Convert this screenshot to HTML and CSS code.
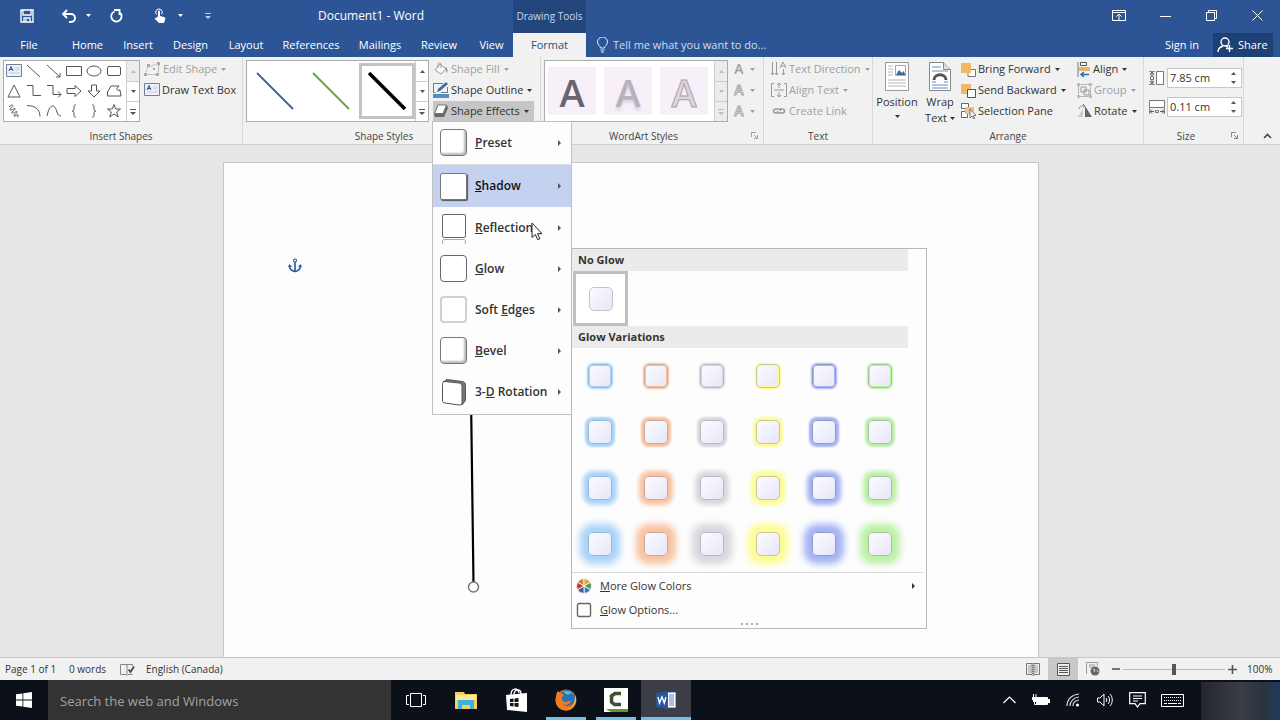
FILE: index.html
```html
<!DOCTYPE html>
<html lang="en">
<head>
<meta charset="utf-8">
<title>Document1 - Word</title>
<link rel="stylesheet" href="styles.css">
</head>
<body>
<svg class="defs" aria-hidden="true">
  <defs>
    <symbol id="down" viewBox="0 0 5 3"><path d="M0 0h5L2.500 3z" fill="currentColor"/></symbol>
    <symbol id="up" viewBox="0 0 5 3"><path d="M0 3h5L2.500 0z" fill="currentColor"/></symbol>
    <symbol id="more" viewBox="0 0 6 6"><path d="M0 0h6v1H0zM0 3h6L3 6z" fill="currentColor"/></symbol>
    <symbol id="right" viewBox="0 0 3 6"><path d="M0 0v6l3-3z" fill="currentColor"/></symbol>
    <symbol id="textbox" viewBox="0 0 16 14"><path d="M.5.500h15v12H.5z" fill="#eef1f8" stroke="#6f7f9c"/><path d="M3 7l2-4.500L7 7M3.700 5.500h2.600" fill="none" stroke="#35507f"/><path d="M9 4h5M9 6h5M3 9h11" stroke="#c5cddd"/></symbol>
    <symbol id="launcher" viewBox="0 0 7 7"><path d="M.5 5V.500H5M3 3l3 3M6.500 3v3.500H3" fill="none" stroke="currentColor"/></symbol>
  </defs>
</svg>
<div class="app">
  <header class="titlebar">
    <div class="qat">
      <button class="qbtn save" aria-label="Save"><svg width="14" height="14" viewBox="0 0 14 14"><path d="M1 1h12v12H1z" fill="none" stroke="#fff" stroke-width="1.400"/><path d="M3 1v5h8V1M4 13V9h6v4M6 10v3" fill="none" stroke="#fff" stroke-width="1.300"/></svg></button>
      <button class="qbtn undo" aria-label="Undo"><svg width="16" height="14" viewBox="0 0 16 14"><path d="M2 5h8a4 4 0 0 1 0 8H8M6 1L2 5l4 4" fill="none" stroke="#fff" stroke-width="1.900"/></svg><svg class="caret" width="5" height="3"><use href="#down"/></svg></button>
      <button class="qbtn redo" aria-label="Repeat"><svg width="14" height="14" viewBox="0 0 14 14"><path d="M5.500 2.500A5.200 5.200 0 1 0 10.500 3.200M5 1h5.500v5" fill="none" stroke="#fff" stroke-width="1.800"/></svg></button>
      <button class="qbtn touch" aria-label="Touch/Mouse Mode"><svg width="13" height="16" viewBox="0 0 13 16"><path d="M4 8V3.500a1 1 0 0 1 2 0V8l4 1c1.500.400 1.500 1.500 1 3l-1 3H5L1 11c-.6-1 .5-1.800 1.400-1z" fill="#fff"/><path d="M2.500 6.500A3.300 3.300 0 1 1 7.600 6.300" fill="none" stroke="#fff"/></svg><svg class="caret" width="5" height="3"><use href="#down"/></svg></button>
      <button class="qbtn custom" aria-label="Customize Quick Access Toolbar"><svg width="6" height="6"><use href="#more"/></svg></button>
    </div>
    <h1 class="doc-title">Document1 - Word</h1>
    <div class="context-title">Drawing Tools</div>
    <div class="window-buttons">
      <button aria-label="Ribbon Display Options"><svg width="14" height="11" viewBox="0 0 14 11"><path d="M.5.500h13v10H.5zM0 2.500h14M7 10V4M4.500 6.500L7 4l2.500 2.500" fill="none" stroke="#fff"/></svg></button>
      <button aria-label="Minimize"><svg width="11" height="11" viewBox="0 0 11 11"><path d="M0 6.500h11" stroke="#fff"/></svg></button>
      <button aria-label="Restore"><svg width="11" height="11" viewBox="0 0 11 11"><path d="M.5 2.500h8v8h-8zM2.500 2V.500h8v8H9" fill="none" stroke="#fff"/></svg></button>
      <button aria-label="Close"><svg width="11" height="11" viewBox="0 0 11 11"><path d="M.5.500l10 10M10.500.500l-10 10" stroke="#fff"/></svg></button>
    </div>
  </header>

  <nav class="tabs">
    <div class="tab-list">
      <button>File</button><button>Home</button><button>Insert</button><button>Design</button><button>Layout</button><button>References</button><button>Mailings</button><button>Review</button><button>View</button><button class="active">Format</button>
    </div>
    <label class="tell"><svg width="11" height="16" viewBox="0 0 11 16"><path d="M3.500 11c0-2-3-3-3-6a5 5 0 0 1 10 0c0 3-3 4-3 6zM3.500 13h4M4 15h3" fill="none" stroke="#e6eefb"/></svg><input type="text" placeholder="Tell me what you want to do..." aria-label="Tell me what you want to do"></label>
    <button class="signin">Sign in</button>
    <button class="share"><svg width="17" height="16" viewBox="0 0 17 16"><circle cx="8" cy="5" r="4" fill="none" stroke="#fff" stroke-width="1.400"/><path d="M1 15c0-3 2-5 5-6M9 9l2 1M12.500 8v7M9 11.500h7" fill="none" stroke="#fff" stroke-width="1.400"/></svg>Share</button>
  </nav>

  <section class="ribbon">
    <div class="group insert-shapes">
      <div class="group-body">
        <div class="gallery">
          <div class="shape-grid">
            <button aria-label="Text box"><svg width="16" height="14"><use href="#textbox"/></svg></button>
            <button aria-label="Line"><svg viewBox="0 0 16 14"><path d="M1 1l13 12"/></svg></button>
            <button aria-label="Arrow"><svg viewBox="0 0 16 14"><path d="M1 1l13 12M14 9v4h-4"/></svg></button>
            <button aria-label="Rectangle"><svg viewBox="0 0 16 14"><path d="M.5 2.500h15v9H.5z"/></svg></button>
            <button aria-label="Oval"><svg viewBox="0 0 16 14"><ellipse cx="8" cy="7" rx="7" ry="5"/></svg></button>
            <button aria-label="Rounded rectangle"><svg viewBox="0 0 16 14"><rect x="1.500" y="2.500" width="13" height="9" rx="1.500"/></svg></button>
            <button aria-label="Triangle"><svg viewBox="0 0 16 14"><path d="M8 1l6 12H2z"/></svg></button>
            <button aria-label="Elbow connector"><svg viewBox="0 0 16 14"><path d="M1 1.500h6v10h8"/></svg></button>
            <button aria-label="Elbow arrow"><svg viewBox="0 0 16 14"><path d="M1 1.500h6v9h8M12 7.500l3 3-3 3"/></svg></button>
            <button aria-label="Right arrow"><svg viewBox="0 0 16 14"><path d="M1 4.500h8v-3l6 5.500-6 5.500v-3H1z"/></svg></button>
            <button aria-label="Down arrow"><svg viewBox="0 0 16 14"><path d="M5.500 1h5v6h3.500L8 13 2 7h3.500z"/></svg></button>
            <button aria-label="Freeform"><svg viewBox="0 0 16 14"><path d="M5 2h8c-4 3-2 5 1 4l1 6H1.500V8z"/></svg></button>
            <button aria-label="Scribble"><svg viewBox="0 0 16 14"><path d="M3 3c3-3 5-2 3 0S3 6 5 6s4-3 4-1-5 3-3 4 5-3 5-1-4 3-3 4 3-2 4-1 0 2-1 2"/></svg></button>
            <button aria-label="Arc"><svg viewBox="0 0 16 14"><path d="M1 1.500c8 0 13 4 13 11"/></svg></button>
            <button aria-label="Curve"><svg viewBox="0 0 16 14"><path d="M1 12C3 3 5 2 7 2s3 3 4 6 2 4 4 4"/></svg></button>
            <button aria-label="Left brace"><svg viewBox="0 0 16 14"><path d="M10 1c-2 0-2 0-2 3s-1 3-2 3c1 0 2 0 2 3s0 3 2 3"/></svg></button>
            <button aria-label="Right brace"><svg viewBox="0 0 16 14"><path d="M6 1c2 0 2 0 2 3s1 3 2 3c-1 0-2 0-2 3s0 3-2 3"/></svg></button>
            <button aria-label="Star"><svg viewBox="0 0 16 14"><path d="M8 .500l1.700 4.500H14.500l-3.800 3 1.500 5L8 10l-4.200 3 1.500-5-3.800-3h4.800z"/></svg></button>
          </div>
          <div class="scroller"><button class="off" aria-label="Up"><svg width="5" height="3"><use href="#up"/></svg></button><button aria-label="Down"><svg width="5" height="3"><use href="#down"/></svg></button><button aria-label="More"><svg width="6" height="6"><use href="#more"/></svg></button></div>
        </div>
        <div class="stack">
          <button class="cmd off"><svg width="17" height="14" viewBox="0 0 17 14"><path d="M1.500 12.500L4 4c4 2 6-3 11-2l-1 10.500z" fill="none" stroke="#a8a8a8" stroke-dasharray="2 1"/><path d="M0 11h3v3H0zM3 2h3v3H3zM13 0h3v3h-3zM12 11h3v3h-3zM9 6h2v2H9z" fill="#aaa"/></svg>Edit Shape<svg class="caret" width="5" height="3"><use href="#down"/></svg></button>
          <button class="cmd"><svg width="16" height="14"><use href="#textbox"/></svg>Draw Text Box</button>
        </div>
      </div>
      <h2>Insert Shapes</h2>
    </div>

    <div class="group shape-styles">
      <div class="group-body">
        <div class="gallery">
          <div class="style-grid">
            <button aria-label="Blue line"><svg width="40" height="40" viewBox="0 0 40 40"><path d="M2 2l36 36" stroke="#3d5aa8" stroke-width="1.800"/></svg></button>
            <button aria-label="Green line"><svg width="40" height="40" viewBox="0 0 40 40"><path d="M2 2l36 36" stroke="#63a537" stroke-width="1.800"/></svg></button>
            <button class="selected" aria-label="Black line"><svg width="40" height="40" viewBox="0 0 40 40"><path d="M2 2l36 36" stroke="#000" stroke-width="3.500"/></svg></button>
          </div>
          <div class="scroller"><button aria-label="Up"><svg width="5" height="3"><use href="#up"/></svg></button><button aria-label="Down"><svg width="5" height="3"><use href="#down"/></svg></button><button aria-label="More"><svg width="6" height="6"><use href="#more"/></svg></button></div>
        </div>
        <div class="stack">
          <button class="cmd off"><svg width="16" height="14" viewBox="0 0 16 14"><path d="M7 2l6 5-5 5-6-4zM5 6V2.500a1.500 1.500 0 0 1 3 0V6" fill="#fafafa" stroke="#9c9c9c"/><path d="M12 5c3 1 3 4 2 6-1-1-1-3-2-4z" fill="#9c9c9c"/></svg>Shape Fill<svg class="caret" width="5" height="3"><use href="#down"/></svg></button>
          <button class="cmd"><svg width="16" height="16" viewBox="0 0 16 16"><path d="M10 1.500H.500v9h2M14.500 5v5.500H8" fill="none" stroke="#777"/><path d="M4 10l1-3 8-7 2 2-8 7z" fill="#3c6ca8"/><path d="M0 12h16v4H0z" fill="#4e8fc9"/></svg>Shape Outline<svg class="caret" width="5" height="3"><use href="#down"/></svg></button>
          <div class="dropdown">
            <button class="cmd pressed" aria-expanded="true"><svg width="16" height="14" viewBox="0 0 16 14"><path d="M5 1h9l1 3-4 9H2l-1-3z" fill="#666"/><path d="M5 1h8.500L10 9.500H1.500z" fill="#fff" stroke="#777"/></svg>Shape Effects<svg class="caret" width="5" height="3"><use href="#down"/></svg></button>
            <div class="menu">
              <ul>
                <li><button class="effect"><i class="tile preset"></i><span><u>P</u>reset</span><svg width="3" height="6"><use href="#right"/></svg></button></li>
                <li><button class="effect hot"><i class="tile shadow"></i><span><u>S</u>hadow</span><svg width="3" height="6"><use href="#right"/></svg></button></li>
                <li><button class="effect"><svg width="28" height="32" viewBox="0 0 28 32"><rect x="2.500" y="2.500" width="23" height="23" rx="1.500" fill="#fff" stroke="#666"/><path d="M2.500 32v-3l1-1.500h21l1 1.500v3" fill="none" stroke="#aaa"/></svg><span><u>R</u>eflection</span><svg width="3" height="6"><use href="#right"/></svg></button></li>
                <li><button class="effect"><i class="tile glow"></i><span><u>G</u>low</span><svg width="3" height="6"><use href="#right"/></svg></button></li>
                <li><button class="effect"><i class="tile soft"></i><span>Soft <u>E</u>dges</span><svg width="3" height="6"><use href="#right"/></svg></button></li>
                <li><button class="effect"><i class="tile preset"></i><span><u>B</u>evel</span><svg width="3" height="6"><use href="#right"/></svg></button></li>
                <li><button class="effect"><svg width="28" height="28" viewBox="0 0 28 28"><path d="M3 4l4-2.500 15 2c3 .500 3.500 2 3.500 4v15L22 27z" fill="#777" stroke="#555"/><path d="M5 3.500l14 1.500c2 .200 3 1.500 3 3.500v16c0 2-1 2.700-3 2.500L5 25c-2-.3-2.500-1.500-2.500-3V6.500c0-2 .700-3.200 2.500-3z" fill="#fff" stroke="#555"/></svg><span>3-<u>D</u> Rotation</span><svg width="3" height="6"><use href="#right"/></svg></button></li>
              </ul>
              <div class="submenu">
                <h3>No Glow</h3>
                <button class="noglow" aria-label="No Glow"><i class="chip"></i></button>
                <h3>Glow Variations</h3>
                <div class="glow-grid">
                  <button class="c1 s1" aria-label="Blue, 5 pt"><i class="chip"></i></button><button class="c2 s1" aria-label="Orange, 5 pt"><i class="chip"></i></button><button class="c3 s1" aria-label="Gray, 5 pt"><i class="chip"></i></button><button class="c4 s1" aria-label="Gold, 5 pt"><i class="chip"></i></button><button class="c5 s1" aria-label="Indigo, 5 pt"><i class="chip"></i></button><button class="c6 s1" aria-label="Green, 5 pt"><i class="chip"></i></button>
                  <button class="c1 s2" aria-label="Blue, 8 pt"><i class="chip"></i></button><button class="c2 s2" aria-label="Orange, 8 pt"><i class="chip"></i></button><button class="c3 s2" aria-label="Gray, 8 pt"><i class="chip"></i></button><button class="c4 s2" aria-label="Gold, 8 pt"><i class="chip"></i></button><button class="c5 s2" aria-label="Indigo, 8 pt"><i class="chip"></i></button><button class="c6 s2" aria-label="Green, 8 pt"><i class="chip"></i></button>
                  <button class="c1 s3" aria-label="Blue, 11 pt"><i class="chip"></i></button><button class="c2 s3" aria-label="Orange, 11 pt"><i class="chip"></i></button><button class="c3 s3" aria-label="Gray, 11 pt"><i class="chip"></i></button><button class="c4 s3" aria-label="Gold, 11 pt"><i class="chip"></i></button><button class="c5 s3" aria-label="Indigo, 11 pt"><i class="chip"></i></button><button class="c6 s3" aria-label="Green, 11 pt"><i class="chip"></i></button>
                  <button class="c1 s4" aria-label="Blue, 18 pt"><i class="chip"></i></button><button class="c2 s4" aria-label="Orange, 18 pt"><i class="chip"></i></button><button class="c3 s4" aria-label="Gray, 18 pt"><i class="chip"></i></button><button class="c4 s4" aria-label="Gold, 18 pt"><i class="chip"></i></button><button class="c5 s4" aria-label="Indigo, 18 pt"><i class="chip"></i></button><button class="c6 s4" aria-label="Green, 18 pt"><i class="chip"></i></button>
                </div>
                <div class="sub-actions">
                  <button><svg width="16" height="16" viewBox="-8 -8 16 16"><g stroke="#fff" stroke-width=".8"><path d="M0 0L-6.500-3.700A7.500 7.500 0 0 1 0-7.500z" fill="#c98a3a"/><path d="M0 0V-7.500A7.500 7.500 0 0 1 6.500-3.700z" fill="#e8a33d"/><path d="M0 0L6.500-3.700A7.500 7.500 0 0 1 6.500 3.700z" fill="#5b8f5a"/><path d="M0 0L6.500 3.700A7.500 7.500 0 0 1 0 7.500z" fill="#3b7fb5"/><path d="M0 0V7.500A7.500 7.500 0 0 1-6.500 3.700z" fill="#3f5fa8"/><path d="M0 0L-6.500 3.700A7.500 7.500 0 0 1-6.500-3.700z" fill="#c8382c"/></g></svg><span><u>M</u>ore Glow Colors</span><svg width="3" height="6"><use href="#right"/></svg></button>
                  <button><svg width="16" height="16" viewBox="0 0 16 16"><rect x="1.500" y="1.500" width="13" height="13" rx="1.500" fill="#fff" stroke="#666" stroke-width="1.400"/></svg><span><u>G</u>low Options...</span></button>
                </div>
                <div class="grip"><i></i><i></i><i></i><i></i></div>
              </div>
              <svg class="cursor" width="12" height="19" viewBox="0 0 12 19"><path d="M1 1v14.500l3.300-3 2.400 5.200 2.200-1-2.400-5H11z" fill="#fff" stroke="#222"/></svg>
            </div>
          </div>
        </div>
      </div>
      <h2>Shape Styles</h2>
    </div>

    <div class="group wordart">
      <div class="group-body">
        <div class="gallery">
          <div class="art-grid"><button class="art a1">A</button><button class="art a2">A</button><button class="art a3">A</button></div>
          <div class="scroller dim"><button aria-label="Up"><svg width="5" height="3"><use href="#up"/></svg></button><button aria-label="Down"><svg width="5" height="3"><use href="#down"/></svg></button><button aria-label="More"><svg width="6" height="6"><use href="#more"/></svg></button></div>
        </div>
        <div class="stack letters">
          <button class="cmd off"><b>A</b><svg class="caret" width="5" height="3"><use href="#down"/></svg></button>
          <button class="cmd off"><b class="outline">A</b><svg class="caret" width="5" height="3"><use href="#down"/></svg></button>
          <button class="cmd off"><b class="outline">A</b><svg class="caret" width="5" height="3"><use href="#down"/></svg></button>
        </div>
      </div>
      <h2>WordArt Styles</h2>
      <button class="launch off" aria-label="WordArt options"><svg width="7" height="7"><use href="#launcher"/></svg></button>
    </div>

    <div class="group text-group">
      <div class="group-body">
        <div class="stack">
          <button class="cmd off"><svg width="16" height="16" viewBox="0 0 16 16"><path d="M1.500 1v12M5.500 1v12M9 7l3-6 3 6M10 5h4M12.500 8v6M0 12l1.500 2L3 12M4 12l1.500 2L7 12M11 12l1.500 2 1.500-2" fill="none" stroke="#999"/></svg>Text Direction<svg class="caret" width="5" height="3"><use href="#down"/></svg></button>
          <button class="cmd off"><svg width="16" height="16" viewBox="0 0 16 16"><path d="M3 1.500H.500v13H3M13 1.500h2.500v13H13M3 8h10M8 1v5M8 10v5M6 3l2-2 2 2M6 13l2 2 2-2" fill="none" stroke="#999"/></svg>Align Text<svg class="caret" width="5" height="3"><use href="#down"/></svg></button>
          <button class="cmd off"><svg width="16" height="14" viewBox="0 0 16 14"><path d="M7 9H5a2.500 2 0 0 1 0-4h2.500a2 2 0 0 1 2 2M9 5h2a2.500 2 0 0 1 0 4H8.500a2 2 0 0 1-2-2" fill="none" stroke="#999" stroke-width="1.500"/></svg>Create Link</button>
        </div>
      </div>
      <h2>Text</h2>
    </div>

    <div class="group arrange">
      <div class="group-body">
        <button class="big position"><svg width="24" height="30" viewBox="0 0 24 30"><path d="M.5.500h23v28H.5z" fill="#fff" stroke="#999"/><path d="M3 4h5M3 7h5M3 10h5M3 13h5M3 18h18M3 21h18M3 24h18" stroke="#b5b5b5"/><path d="M10.500 3.500h10v10h-10z" fill="#fff" stroke="#9aa7b8"/><path d="M11 13l3-5 3 3 1.500-2 2 4z" fill="#3f6797"/></svg><span>Position</span><svg class="caret" width="5" height="3"><use href="#down"/></svg></button>
        <button class="big wrap"><svg width="22" height="30" viewBox="0 0 22 30"><path d="M.5.500h14l7 7v21H.5z" fill="#fff" stroke="#888"/><path d="M14.500.500v7h7" fill="#ddd" stroke="#888"/><path d="M3 5h9M3 9h16M3 20h4M15 20h4M3 23h16M3 26h16" stroke="#5f8fc8"/><path d="M5 18c0-7 12-7 12 0" fill="none" stroke="#555" stroke-width="3"/></svg><span>Wrap<br>Text <svg class="caret" width="5" height="3"><use href="#down"/></svg></span></button>
        <div class="stack order">
          <button class="cmd"><svg width="15" height="15" viewBox="0 0 15 15"><path d="M7 7.500h7.500v7H7z" fill="#fff" stroke="#777"/><path d="M0 1h10v10H0z" fill="#ecb966"/></svg>Bring Forward<svg class="caret" width="5" height="3"><use href="#down"/></svg></button>
          <button class="cmd"><svg width="15" height="15" viewBox="0 0 15 15"><path d="M0 1h10v10H0z" fill="#ecb966"/><path d="M6.500 6.500h8v8h-8z" fill="#fff" stroke="#555"/></svg>Send Backward<svg class="caret" width="5" height="3"><use href="#down"/></svg></button>
          <button class="cmd"><svg width="15" height="16" viewBox="0 0 15 16"><path d="M.5.500h7v5h-7zM.5 8.500h6v6h-6z" fill="#fff" stroke="#666"/><path d="M4 4h9v7H4z" fill="#eebd8b"/><path d="M9 6v9l2-2 1.500 3 1.200-.6-1.400-3H15z" fill="#fff" stroke="#555" stroke-width=".8"/></svg>Selection Pane</button>
        </div>
        <div class="stack">
          <button class="cmd"><svg width="14" height="15" viewBox="0 0 14 15"><path d="M1 0v15" stroke="#777"/><path d="M3.500.500h6v3h-6z" fill="#fff" stroke="#555"/><path d="M2 5h11v4H2z" fill="#ecb36a"/><path d="M12 12.500H4M7 10l-3 2.500L7 15" fill="none" stroke="#2c6ab0" stroke-width="1.500"/></svg>Align<svg class="caret" width="5" height="3"><use href="#down"/></svg></button>
          <button class="cmd off"><svg width="15" height="15" viewBox="0 0 15 15"><path d="M1.500 1.500h12v12h-12z" fill="none" stroke="#999" stroke-dasharray="2 1"/><path d="M4 4h5v5H4zM7 7h5v5H7z" fill="none" stroke="#999"/><path d="M0 0h3v3H0zM12 0h3v3h-3zM0 12h3v3H0zM12 12h3v3h-3z" fill="#bbb"/></svg>Group<svg class="caret" width="5" height="3"><use href="#down"/></svg></button>
          <button class="cmd"><svg width="15" height="14" viewBox="0 0 15 14"><path d="M8 2l7 11H8z" fill="#666"/><path d="M6 5v8H.500z" fill="#ccc"/><path d="M2 5c1-3 3-4 6-3M6 0l2 2-2 2" fill="none" stroke="#888"/></svg>Rotate<svg class="caret" width="5" height="3"><use href="#down"/></svg></button>
        </div>
      </div>
      <h2>Arrange</h2>
    </div>

    <div class="group size">
      <div class="group-body sizes">
        <div class="field"><label for="height" aria-label="Height"><svg width="16" height="16" viewBox="0 0 16 16"><path d="M7.500 1.500h7v13h-7z" fill="#fff" stroke="#777"/><path d="M0 1.500h6M0 14.500h6" stroke="#888"/><path d="M3 2v4M3 10v4M1 5l2-3 2 3M1 11l2 3 2-3" fill="none" stroke="#3d6496"/><path d="M1.500 6.500h3v3h-3z" fill="none" stroke="#777"/></svg></label><div class="spin"><input id="height" type="text" value="7.85 cm"><svg width="5" height="12" viewBox="0 0 5 12"><path d="M0 3h5L2.500 0zM0 9h5l-2.500 3z" fill="#555"/></svg></div></div>
        <div class="field"><label for="width" aria-label="Width"><svg width="16" height="16" viewBox="0 0 16 16"><path d="M.5 1.500h15v7H.5z" fill="#fff" stroke="#777"/><path d="M.5 9v6M15.500 9v6" stroke="#888"/><path d="M1 12.500h4M11 12.500h4M3 10.500l-2 2 2 2M13 10.500l2 2-2 2" fill="none" stroke="#3d6496"/><path d="M6.500 11.500h3v2h-3z" fill="none" stroke="#777"/></svg></label><div class="spin"><input id="width" type="text" value="0.11 cm"><svg width="5" height="12" viewBox="0 0 5 12"><path d="M0 3h5L2.500 0zM0 9h5l-2.500 3z" fill="#555"/></svg></div></div>
      </div>
      <h2>Size</h2>
      <button class="launch" aria-label="Size options"><svg width="7" height="7"><use href="#launcher"/></svg></button>
    </div>
    <button class="collapse" aria-label="Collapse the Ribbon"><svg width="9" height="6" viewBox="0 0 9 6"><path d="M1 5l3.500-3.500L8 5" fill="none" stroke="#444" stroke-width="1.600"/></svg></button>
  </section>

  <main class="workspace">
    <article class="page">
      <svg class="anchor" width="14" height="15" viewBox="0 0 14 15"><circle cx="7" cy="2.500" r="1.500" fill="none" stroke="#2f6299" stroke-width="1.200"/><path d="M7 4v9.500M1.500 7.500c0 3.500 2.500 5.500 5.500 6 3-.5 5.500-2.500 5.500-6" fill="none" stroke="#2f6299" stroke-width="1.700"/><path d="M0 9l1.500-3L4 9zM10 9l2.500-3L14 9z" fill="#2f6299"/></svg>
      <svg class="drawn-line" width="16" height="350" viewBox="0 0 16 350"><path d="M5 0l4.500 340" stroke="#000" stroke-width="2.200"/><circle cx="9.500" cy="343" r="5" fill="#fff" stroke="#777" stroke-width="1.500"/></svg>
    </article>
  </main>

  <footer class="status">
    <span class="pages">Page 1 of 1</span><span class="words">0 words</span>
    <button class="proof" aria-label="Proofing"><svg width="15" height="13" viewBox="0 0 15 13"><path d="M7 1.500v10M7 1.500H.500v10H6l1 1 1-1h4.500M7 1.500h5.500V3" fill="none" stroke="#888"/><path d="M8.500 6.500l2 2.500L14 3.500" fill="none" stroke="#444" stroke-width="1.700"/></svg></button>
    <span>English (Canada)</span>
    <div class="views">
      <button aria-label="Read Mode"><svg width="14" height="13" viewBox="0 0 14 13"><path d="M.5.500H6v11H.5zM8 .500h5.500v11H8z" fill="none" stroke="#777"/><path d="M2 3h3M2 5h3M2 7h3M2 9h3M9 3h3M9 5h3M9 7h3M9 9h3" stroke="#999"/><path d="M7 0v13" stroke="#444" stroke-dasharray="1 1"/></svg></button>
      <button class="on" aria-label="Print Layout"><svg width="13" height="13" viewBox="0 0 13 13"><path d="M.5.500h12v12H.5z" fill="#eee" stroke="#555"/><path d="M2 3.500h9M2 5.500h9M2 7.500h9M2 9.500h9" stroke="#555"/></svg></button>
      <button aria-label="Web Layout"><svg width="14" height="14" viewBox="0 0 14 14"><path d="M.5 12V.500h11V4M3 3h6M3 5h4" fill="none" stroke="#999"/><circle cx="9" cy="9" r="4.500" fill="#666"/><path d="M7 7l2 1-1 2M11 8l1 2" fill="none" stroke="#ddd"/></svg></button>
    </div>
    <div class="zoom">
      <button aria-label="Zoom out"><svg width="8" height="8" viewBox="0 0 8 8"><path d="M0 4h8" stroke="#555" stroke-width="1.600"/></svg></button>
      <input type="range" min="0" max="100" value="50" aria-label="Zoom">
      <button aria-label="Zoom in"><svg width="9" height="9" viewBox="0 0 9 9"><path d="M0 4.500h9M4.500 0v9" stroke="#555" stroke-width="1.600"/></svg></button>
      <span>100%</span>
    </div>
  </footer>

  <div class="taskbar">
    <button class="start" aria-label="Start"><svg width="16" height="16" viewBox="0 0 16 16"><path d="M0 2.300L6.500 1.400v6.200H0zM7.300 1.300L16 0v7.600H7.300zM0 8.400h6.500v6.200L0 13.700zM7.300 8.400H16V16l-8.700-1.300z" fill="#fff"/></svg></button>
    <input class="search" type="text" placeholder="Search the web and Windows" aria-label="Search the web and Windows">
    <div class="apps">
      <button aria-label="Task View"><svg width="20" height="14" viewBox="0 0 20 14"><path d="M4.500.500h11v13h-11zM3 2.500H.500v9H3M17 2.500h2.500v9H17" fill="none" stroke="#fff"/></svg></button>
      <button aria-label="File Explorer"><svg width="22" height="20" viewBox="0 0 22 20"><path d="M0 2h9l1 2h12v15H0z" fill="#f3cf63"/><path d="M1 5h20v5H1z" fill="#fbe795"/><path d="M3 10h16v9h-4v-4H7v4H3z" fill="#3eb1dd"/></svg></button>
      <button aria-label="Store"><svg width="21" height="24" viewBox="0 0 21 24"><path d="M0 7l21-2v19L1 22z" fill="#fff"/><path d="M5 7c0-7 7-8 8-2M8 6c1-5 7-6 7 0" fill="none" stroke="#fff" stroke-width="1.400"/><path d="M4 11l3.500-.4v3.300H4zM8.500 10.400l4-.4v3.900h-4zM4 15h3.500v3.400L4 18zM8.500 15h4v4l-4-.5z" fill="#111"/></svg></button>
      <button class="running" aria-label="Firefox"><svg width="22" height="22" viewBox="0 0 22 22"><circle cx="11" cy="11" r="10.500" fill="#e66a20"/><circle cx="12" cy="9" r="8" fill="#2873b8"/><path d="M8 3c3-2 8-1 10 2-3-1-4 0-5 1z" fill="#63b6df"/><path d="M1 8c0-3 1-5 2-6 1 2 3 2 5 3 1 1 0 3-1 3s0 5 3 5 4-2 6-1c-1 4-6 5-9 3 4 5 12 3 13-5l1 1c0 6-4 10.500-10 10.500S.500 17 .500 11z" fill="#f07c22"/><path d="M21 7c1 8-4 14-11 14 7-1 10-5 10-12z" fill="#f9c83a"/></svg></button>
      <button class="running" aria-label="Camtasia"><svg width="24" height="24" viewBox="0 0 24 24"><path d="M0 0h24v24H0z" fill="#fff"/><path d="M17 5.500h-6L7.500 8v6l3 2.500H17" fill="none" stroke="#3c5130" stroke-width="3.500"/><path d="M2 21h22v3H7z" fill="#6c942c"/></svg></button>
      <button class="running current" aria-label="Word"><svg width="20" height="18" viewBox="0 0 20 18"><path d="M11 1.500h8.500v15H11z" fill="#fff" stroke="#9fb4dc"/><path d="M13 4h5M13 6h5M13 8h5M13 10h5M13 12h5M13 14h5" stroke="#5c7fc0"/><path d="M0 2l12-2v18L0 16z" fill="#2a5699"/><path d="M2 6l1.500 6L6 6l2.300 6L10 6" fill="none" stroke="#fff" stroke-width="1.400"/></svg></button>
    </div>
    <div class="tray">
      <button aria-label="Show hidden icons"><svg width="13" height="8" viewBox="0 0 13 8"><path d="M.5 7l6-6 6 6" fill="none" stroke="#fff" stroke-width="1.200"/></svg></button>
      <button aria-label="Battery"><svg width="18" height="12" viewBox="0 0 18 12"><path d="M4.500 3.500h11v7h-11z" fill="#fff" stroke="#fff"/><path d="M16 5h2v4h-2zM0 3h5v3H4v2H1V6H0z" fill="#fff"/><path d="M1.500 0v3M4 0v3M2.500 8v2.500H5" fill="none" stroke="#fff"/></svg></button>
      <button aria-label="Wi-Fi"><svg width="14" height="14" viewBox="0 0 14 14"><g fill="none" stroke="#ddd" stroke-width="1.200"><path d="M1 13C1 6 6 1.500 13 1M4 13c0-5 4-8.500 9-9M7 13c0-3 2-5.500 6-6"/></g><circle cx="11.500" cy="12" r="1.600" fill="#fff"/></svg></button>
      <button aria-label="Volume"><svg width="16" height="14" viewBox="0 0 16 14"><path d="M.5 5H3l4-4v12L3 9H.5zM9 5c1 1 1 3 0 4M11 3c2 2 2 6 0 8M13 1c3 3 3 9 0 12" fill="none" stroke="#fff"/></svg></button>
      <button aria-label="Action Center"><svg width="17" height="16" viewBox="0 0 17 16"><path d="M.7.700h15.600v11H11L8.500 15 6 11.700H.700z" fill="none" stroke="#fff" stroke-width="1.200"/><path d="M4 4h9M4 6.500h9M4 9h5" stroke="#fff"/></svg></button>
      <button class="keys" aria-label="Touch Keyboard"><svg width="23" height="13" viewBox="0 0 23 13"><path d="M.5.500h22v12H.5z" fill="none" stroke="#fff"/><path d="M3 3.500h17M3 6.500h17" stroke="#fff" stroke-dasharray="1 1"/><path d="M3 9.500h3M7 9.500h9M17 9.500h3" stroke="#fff"/></svg></button>
      <div class="clock"></div>
    </div>
  </div>
</div>
</body>
</html>
```
FILE: styles.css
```css
* { box-sizing: border-box; }
body { margin: 0; font-family: "Open Sans", "Noto Sans", sans-serif; font-size: 11px; line-height: 16px; color: #333; background: #e6e6e6; }
button, input { font: inherit; color: inherit; margin: 0; padding: 0; border: 0; background: none; border-radius: 0; outline: 0; }
h1, h2, h3, ul { margin: 0; padding: 0; font-size: 11px; font-weight: 400; list-style: none; }
svg { display: block; flex: none; }
i { display: block; flex: none; }
.defs { position: absolute; width: 0; height: 0; }
.app { display: flex; flex-direction: column; min-height: 100vh; overflow: hidden; }

/* title bar */
.titlebar { display: flex; height: 33px; background: #2d5596; color: #fff; }
.qat { display: flex; align-items: center; width: 229px; padding-left: 20px; padding-bottom: 2px; }
.qbtn { display: flex; align-items: center; justify-content: space-between; }
.save { width: 41px; }
.undo { width: 30px; }
.redo { width: 33px; margin-left: 18px; justify-content: flex-start; }
.touch { width: 29px; margin-left: 12px; }
.custom { margin-left: 22px; color: #b9cbe6; }
.doc-title { width: 284px; text-align: center; font-size: 12px; line-height: 32px; }
.context-title { width: 73px; text-align: center; font-size: 10px; line-height: 33px; background: #23467d; color: #c9d8f0; white-space: nowrap; }
.window-buttons { display: flex; margin-left: auto; }
.window-buttons button { display: flex; align-items: center; justify-content: center; width: 46px; height: 30px; }

/* tabs */
.tabs { display: flex; height: 24px; background: #2d5596; color: #fff; }
.tab-list { display: grid; grid-template-columns: 58px 59px 42px 63px 48px 82px 56px 62px 43px 73px; }
.tab-list button { white-space: nowrap; }
.tab-list .active { background: #f1f1f1; color: #2a4f87; }
.tell { display: flex; align-items: center; gap: 5px; flex: 1; padding-left: 11px; }
.tell input { flex: 1; }
.tell input::placeholder { color: #cfdcf1; opacity: 1; }
.signin { width: 62px; }
.share { display: flex; align-items: center; gap: 4px; width: 60px; margin-right: 7px; padding-left: 4px; background: #1d4075; }

/* ribbon */
.ribbon { display: flex; height: 88px; background: #f1f1f1; border-bottom: 1px solid #cfcfcf; }
.group { position: relative; display: flex; flex-direction: column; flex: none; border-right: 1px solid #d8d8d8; padding: 2px 0 0 3px; }
.group-body { display: flex; flex: none; height: 68px; }
.group h2 { flex: none; text-align: center; font-size: 10px; line-height: 18px; color: #444; margin-right: 3px; }
.insert-shapes { width: 243px; }
.shape-styles { width: 298px; }
.shape-styles h2 { margin-right: 18px; }
.wordart { width: 223px; }
.wordart h2 { margin-right: 20px; }
.text-group { width: 109px; }
.arrange { width: 271px; padding-left: 0; }
.arrange h2 { margin-right: 0; }
.size { width: 100px; }
.size h2 { margin-right: 18px; }
.gallery { display: flex; height: 62px; margin-top: 1px; background: #fff; border: 1px solid #ababab; }
.shape-grid { display: grid; grid-template-columns: repeat(6, 20px); grid-auto-rows: 20px; width: 122px; }
.shape-grid button, .style-grid button { display: flex; align-items: center; justify-content: center; }
.shape-grid svg { width: 16px; height: 14px; fill: none; stroke: #555; }
.scroller { display: grid; grid-template-rows: repeat(3, 1fr); width: 13px; border-left: 1px solid #cdcdcd; color: #555; }
.scroller button { display: flex; align-items: center; justify-content: center; }
.scroller button + button { border-top: 1px solid #cdcdcd; }
.scroller .off, .dim { background: #ececec; color: #bbb; }
.style-grid { display: grid; grid-template-columns: repeat(3, 56px); }
.style-grid .selected { height: 56px; margin-top: 2px; border: 3px solid #c3c3c3; }
.art-grid { display: flex; align-items: center; gap: 8px; padding: 0 6px 0 3px; }
.art { width: 48px; height: 48px; background: #f7f0f8; font-size: 38px; font-weight: 600; line-height: 50px; }
.a1 { color: #6b6470; }
.a2 { color: #b9b1bc; text-shadow: 0 3px 3px #ddd3df; }
.a3 { color: #dcd6de; -webkit-text-stroke: 1px #aaa3ad; }
.stack { display: grid; grid-template-rows: repeat(3, 20px); row-gap: 1px; align-content: start; justify-items: start; margin-left: 4px; }
.cmd { display: flex; align-items: center; gap: 2px; height: 20px; white-space: nowrap; color: #333; }
.cmd .caret { margin-left: 2px; }
.cmd.off, .launch.off { color: #a0a0a0; }
.cmd b { width: 14px; font-size: 14px; font-weight: 600; }
.cmd .outline { color: #eee; -webkit-text-stroke: 1px #aaa; }
.shape-styles .cmd { width: 101px; }
.cmd.pressed { background: #c6c6c6; }
.launch { position: absolute; right: 5px; bottom: 5px; color: #888; }
.big { display: flex; flex-direction: column; align-items: center; padding-top: 3px; }
.big span { margin-top: 2px; }
.position { width: 48px; }
.position .caret { margin-top: 5px; }
.wrap { width: 38px; }
.wrap .caret { display: inline-block; vertical-align: 2px; }
.order { width: 112px; margin-left: 2px; }
.sizes { flex-direction: column; gap: 9px; padding-top: 9px; }
.field { display: flex; align-items: center; gap: 2px; padding-left: 2px; }
.spin { display: flex; align-items: center; width: 75px; height: 20px; padding: 0 5px 0 2px; background: #fff; border: 1px solid #c6c6c6; }
.spin input { flex: 1; min-width: 0; }
.collapse { align-self: flex-end; margin: 0 8px 5px auto; }

/* effects menu */
.dropdown { position: relative; }
.menu { position: absolute; z-index: 2; left: -1px; top: 20px; width: 140px; padding-bottom: 2px; background: #fdfdfd; border: 1px solid #c0c0c0; color: #333; }
.effect { display: grid; grid-template-columns: 28px 1fr 3px; align-items: center; gap: 7px; width: 100%; height: 41px; padding: 0 10px 0 7px; text-align: left; font-size: 12px; font-weight: 600; white-space: nowrap; }
.effect > svg:last-child { color: #555; }
.menu li:first-child { border-bottom: 1px solid #dedede; padding-bottom: 1px; }
.effect.hot { height: 42px; background: #c5d2ef; color: #111; }
.tile { width: 27px; height: 27px; border: 1px solid #777; border-radius: 4px; background: #fff; }
.preset { box-shadow: inset -2px -2px 2px #bbb; }
.shadow { border-radius: 2px; box-shadow: 1px 1px 1px #555; }
.glow { border-color: #667; }
.soft { border: 2px solid #d0d0d0; }
.submenu { position: absolute; left: 138px; top: 126px; width: 356px; background: #fdfdfd; border: 1px solid #b8b8b8; }
.submenu h3 { margin-right: 18px; padding-left: 6px; line-height: 22px; background: #ebebeb; font-weight: 700; }
.noglow { display: flex; align-items: center; justify-content: center; width: 55px; height: 55px; margin-left: 1px; border: 3px solid #bfbfbf; background: #fff; }
.chip { width: 24px; height: 24px; border: 1px solid #c3c3d0; border-radius: 5px; background: linear-gradient(135deg, #fcfcff, #e6e6fa); }
.glow-grid { display: grid; grid-template-columns: repeat(6, 56px); grid-auto-rows: 56px; }
.glow-grid button { display: flex; align-items: center; justify-content: center; }
.c1 { --glow: #a9d3f7; --edge: #93b9dc; }
.c2 { --glow: #f8c2a0; --edge: #cfa795; }
.c3 { --glow: #d8d7dc; --edge: #b9b8c2; }
.c4 { --glow: #fcfc90; --edge: #c6c697; }
.c5 { --glow: #a3b3f3; --edge: #8c9ad0; }
.c6 { --glow: #bbf0a4; --edge: #a3c39c; }
.glow-grid .chip { border-color: var(--edge); }
.s1 .chip { box-shadow: 0 0 2px 1px var(--glow), inset 0 0 0 1px var(--glow); }
.s2 .chip { box-shadow: 0 0 2px 3px var(--glow); }
.s3 .chip { box-shadow: 0 0 4px 5px var(--glow); }
.s4 .chip { box-shadow: 0 0 7px 8px var(--glow); }
.sub-actions { margin-right: 3px; padding-top: 1px; border-top: 1px solid #dadada; }
.sub-actions button { display: flex; align-items: center; gap: 8px; width: 100%; height: 24px; padding: 0 8px 0 4px; }
.sub-actions span { flex: 1; text-align: left; }
.grip { display: flex; justify-content: center; gap: 3px; height: 6px; padding-top: 1px; }
.grip i { width: 2px; height: 2px; background: #aaa; }
.cursor { position: absolute; left: 98px; top: 100px; }

/* document */
.workspace { display: flex; flex: 1; justify-content: center; padding: 17px 18px 0 0; background: #e6e6e6; }
.page { position: relative; width: 816px; background: #fdfdfd; border: 1px solid #c8c8c8; border-bottom: 0; }
.anchor { position: absolute; left: 64px; top: 95px; }
.drawn-line { position: absolute; left: 240px; top: 81px; }

/* status bar */
.status { display: flex; align-items: center; height: 23px; padding: 0 6px 0 5px; background: #f1f1f1; border-top: 1px solid #c6c6c6; font-size: 10px; }
.pages { width: 64px; }
.words { width: 51px; }
.proof { width: 26px; }
.views { display: flex; align-self: stretch; margin-left: auto; }
.views button { display: flex; align-items: center; justify-content: center; width: 30px; }
.views .on { background: #c8c8c8; }
.zoom { display: flex; align-items: center; gap: 3px; margin-left: 4px; }
.zoom span { margin-left: 7px; width: 27px; }
.zoom input { appearance: none; width: 102px; height: 12px; background: linear-gradient(#bbb, #bbb) center / 100% 1px no-repeat; }
.zoom input::-webkit-slider-thumb { appearance: none; width: 4px; height: 11px; background: #555; }

/* taskbar */
.taskbar { display: flex; height: 40px; background: #0c1019; color: #fff; }
.start { display: flex; align-items: center; justify-content: center; width: 48px; }
.search { width: 343px; padding: 2px 12px 0; background: #333; font-size: 13px; }
.search::placeholder { color: #a2a2a2; opacity: 1; }
.apps { display: flex; }
.apps button { display: flex; align-items: center; justify-content: center; width: 50px; }
.running { background: linear-gradient(#76bde8, #76bde8) center bottom / 40px 3px no-repeat; }
.apps .current { background: linear-gradient(#76bde8, #76bde8) center bottom / 100% 3px no-repeat #3b3e46; }
.tray { display: flex; margin-left: auto; }
.tray button { display: flex; align-items: center; justify-content: center; width: 32px; }
.tray .keys { width: 38px; }
.clock { width: 79px; margin: 2px 0 0 10px; background: linear-gradient(90deg, #24262c, #3a3d44 50%, #2a3340 80%, #1f3a5c); }
```
